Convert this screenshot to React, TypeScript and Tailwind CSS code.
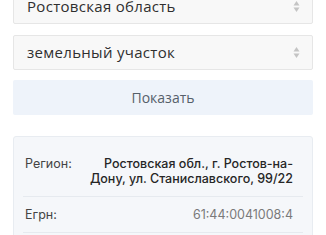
import "react";

const SelectArrows = () => (
  <svg width="7" height="13" viewBox="0 0 7 13" className="shrink-0" aria-hidden="true">
    <path d="M3.5 1 L6.5 5.5 H0.5 Z" fill="#c4c4c4" />
    <path d="M3.5 12 L6.5 7.5 H0.5 Z" fill="#c4c4c4" />
  </svg>
);

const FakeSelect = ({ value, className = "" }: { value: string; className?: string }) => (
  <div
    className={`flex h-[35px] items-center justify-between rounded-[2px] border border-[#e6e6e6] bg-[#f8f8f8] pl-[13px] pr-[12px] text-[15px] tracking-[0.3px] text-[#2f2f2f] ${className}`}
  >
    <span className="leading-none">{value}</span>
    <SelectArrows />
  </div>
);

const InfoRow = ({
  label,
  children,
}: {
  label: string;
  children: React.ReactNode;
}) => (
  <div className="flex items-start justify-between border-b border-[#e6eaef] py-[10px] pl-[2px] pr-[10px] text-[12.5px] leading-[15px]">
    <span className="text-[#444]">{label}</span>
    {children}
  </div>
);

export default function App() {
  return (
    <div className="min-h-screen overflow-hidden bg-white font-['Open_Sans','Noto_Sans',sans-serif]">
      <div className="mt-[-11px] flex flex-col px-[13px]">
        <FakeSelect value="Ростовская область" />
        <FakeSelect value="земельный участок" className="mt-[11px]" />
        <button className="mt-[10px] h-[35px] rounded-[2px] bg-[#eef3fa] text-[14px] text-[#56606a]">
          Показать
        </button>
        <div className="mt-[21px] rounded-[3px] border border-[#e8ecf1] bg-[#f5f7fa] px-[9px] pt-[9px] font-['Inter',sans-serif]">
          <InfoRow label="Регион:">
            <span className="text-right font-medium text-[#262626]">
              Ростовская обл., г. Ростов-на-
              <br />
              Дону, ул. Станиславского, 99/22
            </span>
          </InfoRow>
          <InfoRow label="Егрн:">
            <span className="text-right text-[#7a7a7a]">61:44:0041008:4</span>
          </InfoRow>
          <div className="h-[20px]" />
        </div>
      </div>
    </div>
  );
}
